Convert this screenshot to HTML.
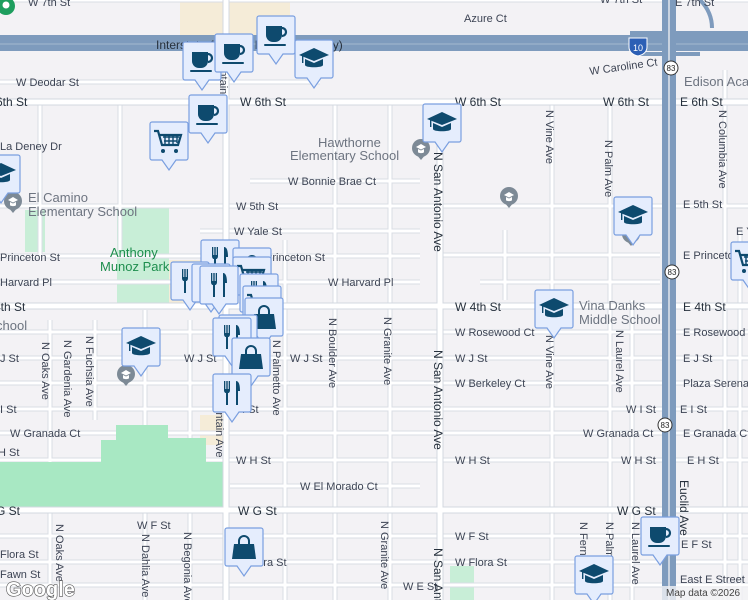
<!DOCTYPE html>
<html><head><meta charset="utf-8"><style>
html,body{margin:0;padding:0;width:748px;height:600px;overflow:hidden;background:#f3f2f5}
svg{display:block}
text{font-family:"Liberation Sans",sans-serif;font-size:11px;fill:#3d4454}
.big{font-size:12px;fill:#26303c}
.poi{font-size:13px;fill:#6d7480}
.park{font-size:13px;fill:#1e8e4e}
</style></head><body>
<svg width="748" height="600" viewBox="0 0 748 600" xmlns="http://www.w3.org/2000/svg">
<defs>
<g id="box"><path d="M2 0h34a2 2 0 0 1 2 2v34a2 2 0 0 1-2 2H26l-7 10-7-10H2a2 2 0 0 1-2-2V2a2 2 0 0 1 2-2z" fill="#e5edfd" stroke="#7a9fe0" stroke-width="1.2"/></g>
<g id="cup"><use href="#box"/><path d="M9 10h16v9a7 7 0 0 1-7 7h-2a7 7 0 0 1-7-7z" fill="#0e4a6e"/><path d="M25 12a4 4 0 0 1 0 8" fill="none" stroke="#0e4a6e" stroke-width="2.2"/><rect x="7" y="28" width="22" height="2" rx="1" fill="#0e4a6e"/></g>
<g id="cap"><use href="#box"/><path d="M4 15l15-7 15 7-15 6z" fill="#0e4a6e"/><path d="M10 19v6c0 3 18 3 18 0v-6l-9 4z" fill="#0e4a6e"/><rect x="7" y="15" width="1.4" height="8" fill="#0e4a6e"/></g>
<g id="fork"><use href="#box"/><path d="M11 7v9c0 2 1 3 2 3v12h2V19c1 0 2-1 2-3V7h-1.3v8h-1V7h-1.4v8h-1V7z" fill="#0e4a6e"/><path d="M23 7c3 0 4 4 4 10h-2v14h-2z" fill="#0e4a6e"/></g>
<g id="bag"><use href="#box"/><path d="M9 16h20l2 15H7z" fill="#0e4a6e"/><path d="M14 16v-3a5 5 0 0 1 10 0v3" fill="none" stroke="#0e4a6e" stroke-width="2"/></g>
<g id="cart"><use href="#box"/><path d="M4 9h4l4 14h16l3-10H10" fill="none" stroke="#0e4a6e" stroke-width="2.2"/><path d="M13 15h16M14 19h13M15 13v9M19 13v9M23 13v9M27 13v8" stroke="#0e4a6e" stroke-width="1.4"/><circle cx="13" cy="29" r="2" fill="#0e4a6e"/><circle cx="26" cy="29" r="2" fill="#0e4a6e"/></g>
<g id="gpin"><circle r="9" fill="#7d8a96"/><path d="M-5 6l5 6 5-6z" fill="#7d8a96"/><path d="M-5 -1l5-3 5 3-5 2.5z M-3 1v3c0 1.5 6 1.5 6 0v-3l-3 1.5z" fill="#fff"/></g>
</defs>

<rect x="180" y="0" width="110" height="35" fill="#f5ecd8"/>
<rect x="168" y="260" width="50" height="45" fill="#f5ecd8"/>
<rect x="200" y="415" width="24" height="30" fill="#f5ecd8"/>
<rect x="117" y="208" width="52" height="98" fill="#c8eed7"/>
<rect x="25" y="210" width="20" height="42" fill="#c8eed7"/>
<rect x="450" y="566" width="24" height="34" fill="#c8eed7"/>

<g stroke="#d9dde4" stroke-width="5" fill="none">
<path d="M0 0H748M0 82H320M0 102H748M250 181H420M0 206H748M200 231H420M0 256H420M0 282H420M0 306H748M0 332H748M0 358H748M0 383H748M0 409H748M0 433H748M0 460H748M230 486H420M0 510H748M0 536H748M0 562H748M0 585H748M440 255H660M480 282H660"/>
<path d="M50 320V600M95 320V420M145 310V600M190 320V600M285 240V600M335 100V600M390 100V600M440 100V600M552 100V600M610 100V600M632 300V600M725 70V600M40 100V260M120 100V250M505 230V300M740 230V600"/>
</g>
<g stroke="#ffffff" stroke-width="3" fill="none">
<path d="M0 0H748M0 82H320M0 102H748M250 181H420M0 206H748M200 231H420M0 256H420M0 282H420M0 306H748M0 332H748M0 358H748M0 383H748M0 409H748M0 433H748M0 460H748M230 486H420M0 510H748M0 536H748M0 562H748M0 585H748M440 255H660M480 282H660"/>
<path d="M50 320V600M95 320V420M145 310V600M190 320V600M285 240V600M335 100V600M390 100V600M440 100V600M552 100V600M610 100V600M632 300V600M725 70V600M40 100V260M120 100V250M505 230V300M740 230V600"/>
</g>
<path d="M116 425H168V438H206V462H223V508H0V462H101V440H116z" fill="#a8e8c3"/>
<path d="M0 102H748M0 306H748M0 510H748M226 0V600M440 100V600" stroke="#d3d8e0" stroke-width="7" fill="none"/>
<path d="M0 102H748M0 306H748M0 510H748M226 0V600M440 100V600" stroke="#fff" stroke-width="5" fill="none"/>

<path d="M0 43H748" stroke="#7e9bbd" stroke-width="16" fill="none"/>
<path d="M0 44H748" stroke="#9db2cc" stroke-width="1.2" fill="none"/>
<path d="M630 33H748M640 54H700" stroke="#7e9bbd" stroke-width="4" fill="none"/>
<path d="M665 0V600M673 0V600" stroke="#7e9bbd" stroke-width="6" fill="none"/>
<path d="M669 0V600" stroke="#c9d3e0" stroke-width="2"/>
<path d="M700 0c10 10 12 20 12 28" stroke="#7e9bbd" stroke-width="4" fill="none"/>

<g transform="translate(638,45)"><path d="M-9 -7h18v9c0 5-4 8-9 9-5-1-9-4-9-9z" fill="#2c5fb5" stroke="#fff"/><text x="0" y="6" text-anchor="middle" style="font-size:9px;fill:#fff">10</text></g>
<circle cx="671" cy="68" r="7" fill="#fff" stroke="#333"/><text x="671" y="71" text-anchor="middle" style="font-size:8px;fill:#222">83</text>
<circle cx="672" cy="272" r="7" fill="#fff" stroke="#333"/><text x="672" y="275" text-anchor="middle" style="font-size:8px;fill:#222">83</text>
<circle cx="665" cy="425" r="7" fill="#fff" stroke="#333"/><text x="665" y="428" text-anchor="middle" style="font-size:8px;fill:#222">83</text>

<circle cx="6" cy="6" r="9" fill="#1e9e5e"/><circle cx="6" cy="5" r="3.5" fill="#fff"/>

<text x="28" y="6">W 7th St</text><text x="464" y="22">Azure Ct</text><text x="675" y="6">E 7th St</text><text x="600" y="3">W 7th St</text>
<text x="156" y="49" class="big">Interstate 10 (San Bernardino Fwy)</text>
<text x="16" y="86">W Deodar St</text>
<text x="-4" y="106" class="big">6th St</text><text x="240" y="106" class="big">W 6th St</text><text x="455" y="106" class="big">W 6th St</text><text x="603" y="106" class="big">W 6th St</text><text x="680" y="106" class="big">E 6th St</text>
<text x="590" y="75" transform="rotate(-8 590 75)">W Caroline Ct</text>
<text x="684" y="86" class="poi">Edison Aca</text>
<text x="0" y="150">La Deney Dr</text>
<text x="318" y="147" class="poi">Hawthorne</text><text x="290" y="160" class="poi">Elementary School</text>
<text x="288" y="185">W Bonnie Brae Ct</text>
<text x="28" y="202" class="poi">El Camino</text><text x="28" y="216" class="poi">Elementary School</text>
<text x="236" y="210">W 5th St</text><text x="683" y="208">E 5th St</text>
<text x="234" y="235">W Yale St</text><text x="736" y="235">E Y</text>
<text x="0" y="261">Princeton St</text><text x="265" y="261">Princeton St</text><text x="683" y="259">E Princeto</text>
<text x="110" y="257" class="park">Anthony</text><text x="100" y="271" class="park">Munoz Park</text>
<text x="0" y="286">Harvard Pl</text><text x="328" y="286">W Harvard Pl</text>
<text x="-6" y="311" class="big">4th St</text><text x="455" y="311" class="big">W 4th St</text><text x="683" y="311" class="big">E 4th St</text>
<text x="579" y="310" class="poi">Vina Danks</text><text x="579" y="324" class="poi">Middle School</text>
<text x="-4" y="330" class="poi">chool</text>
<text x="455" y="336">W Rosewood Ct</text><text x="683" y="336">E Rosewood C</text>
<text x="0" y="362">J St</text><text x="184" y="362">W J St</text><text x="290" y="362">W J St</text><text x="455" y="362">W J St</text><text x="683" y="362">E J St</text>
<text x="455" y="387">W Berkeley Ct</text><text x="683" y="387">Plaza Serena</text>
<text x="0" y="413">I St</text><text x="242" y="413">I St</text><text x="626" y="413">W I St</text><text x="680" y="413">E I St</text>
<text x="10" y="437">W Granada Ct</text><text x="583" y="437">W Granada Ct</text><text x="683" y="437">E Granada Ct</text>
<text x="-2" y="456">H St</text><text x="236" y="464">W H St</text><text x="455" y="464">W H St</text><text x="621" y="464">W H St</text><text x="687" y="464">E H St</text>
<text x="300" y="490">W El Morado Ct</text>
<text x="-4" y="515" class="big">G St</text><text x="238" y="515" class="big">W G St</text><text x="617" y="515" class="big">W G St</text>
<text x="137" y="529">W F St</text><text x="455" y="540">W F St</text><text x="681" y="548">E F St</text>
<text x="0" y="558">Flora St</text><text x="248" y="566">Flora St</text><text x="455" y="566">W Flora St</text>
<text x="0" y="578">Fawn St</text><text x="680" y="583">East E Street</text>
<text x="403" y="590">W E St</text>
<g>
<text transform="translate(42,342) rotate(90)">N Oaks Ave</text>
<text transform="translate(64,340) rotate(90)">N Gardenia Ave</text>
<text transform="translate(86,336) rotate(90)">N Fuchsia Ave</text>
<text transform="translate(56,524) rotate(90)">N Oaks Ave</text>
<text transform="translate(142,534) rotate(90)">N Dahlia Ave</text>
<text transform="translate(184,532) rotate(90)">N Begonia Ave</text>
<text transform="translate(220,38) rotate(90)">N Mountain Ave</text>
<text transform="translate(216,380) rotate(90)">N Mountain Ave</text>
<text transform="translate(273,340) rotate(90)">N Palmetto Ave</text>
<text transform="translate(329,318) rotate(90)">N Boulder Ave</text>
<text transform="translate(384,317) rotate(90)">N Granite Ave</text>
<text transform="translate(381,521) rotate(90)">N Granite Ave</text>
<text transform="translate(434,152) rotate(90)" class="big">N San Antonio Ave</text>
<text transform="translate(434,350) rotate(90)" class="big">N San Antonio Ave</text>
<text transform="translate(434,548) rotate(90)" class="big">N San Ant</text>
<text transform="translate(546,110) rotate(90)">N Vine Ave</text>
<text transform="translate(546,335) rotate(90)">N Vine Ave</text>
<text transform="translate(605,140) rotate(90)">N Palm Ave</text>
<text transform="translate(616,330) rotate(90)">N Laurel Ave</text>
<text transform="translate(719,110) rotate(90)">N Columbia Ave</text>
<text transform="translate(680,480) rotate(90)" class="big">Euclid Ave</text>
<text transform="translate(580,522) rotate(90)">N Fern</text>
<text transform="translate(606,522) rotate(90)">N Palm</text>
<text transform="translate(632,522) rotate(90)">N Laurel Ave</text>
</g>

<use href="#gpin" x="421" y="148"/><use href="#gpin" x="509" y="196"/><use href="#gpin" x="13" y="201"/><use href="#gpin" x="126" y="374"/><use href="#gpin" x="631" y="234"/>

<use href="#cup" x="183" y="42"/><use href="#cup" x="215" y="34"/><use href="#cup" x="257" y="16"/>
<use href="#cap" x="295" y="40"/>
<use href="#cup" x="189" y="95"/>
<use href="#cart" x="150" y="122"/>
<use href="#cap" x="-18" y="155"/>
<use href="#cap" x="423" y="104"/>
<use href="#cap" x="614" y="197"/>
<use href="#cart" x="731" y="242"/>
<use href="#fork" x="201" y="240"/>
<use href="#bag" x="233" y="248"/>
<use href="#cart" x="233" y="257"/>
<use href="#fork" x="171" y="262"/><use href="#fork" x="192" y="264"/><use href="#fork" x="200" y="266"/>
<use href="#fork" x="240" y="274"/><use href="#cart" x="243" y="286"/>
<use href="#bag" x="245" y="298"/>
<use href="#cap" x="535" y="290"/>
<use href="#fork" x="219" y="315"/><use href="#fork" x="213" y="318"/>
<use href="#cap" x="122" y="328"/>
<use href="#bag" x="232" y="338"/>
<use href="#fork" x="213" y="374"/>
<use href="#bag" x="225" y="528"/>
<use href="#cup" x="641" y="517"/>
<use href="#cap" x="575" y="556"/>

<text x="6" y="596" style="font-size:20px;font-weight:bold;fill:#fff;stroke:#555;stroke-width:1.2;paint-order:stroke">Google</text>
<rect x="662" y="586" width="86" height="14" fill="#f3f2f5" fill-opacity=".8"/>
<text x="666" y="596" style="font-size:10px;fill:#444">Map data ©2026</text>
</svg>
</body></html>
